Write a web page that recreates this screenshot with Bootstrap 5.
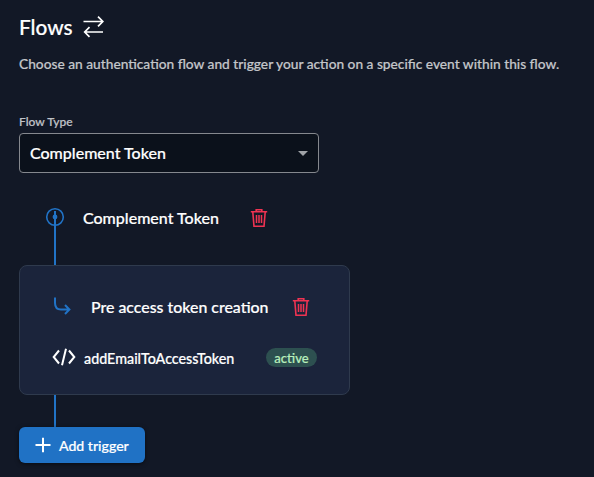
<!DOCTYPE html>
<html lang="en" data-bs-theme="dark">
<head>
<meta charset="utf-8">
<meta name="viewport" content="width=device-width, initial-scale=1">
<title>Flows</title>
<link href="https://cdn.jsdelivr.net/npm/bootstrap@5.3.0/dist/css/bootstrap.min.css" rel="stylesheet">
<style>
body{background:#121826;color:#fff;font-family:Lato,"Liberation Sans",sans-serif;font-weight:500;height:477px;overflow:hidden;-webkit-text-stroke:.2px currentColor}
svg{display:block;flex:none}
.page{padding:13px 19px 0}
.title{font-size:20.800px;line-height:28px;font-weight:500}
.title svg{margin-left:10px}
.lead-text{font-size:13.740px;line-height:20px;color:#c4c6ca;margin:13px 0 0;white-space:nowrap}
.flow-label{font-size:12px;line-height:16px;color:#c0c3c8;margin:40px 0 3px;display:block}
.flow-select{width:300px;height:40px;background:#0b111b;border:1px solid #85888e;border-radius:4px;padding:0 10px;font-size:16px;color:#fff}
.event-row{height:92px;padding-left:26px;font-size:16px}
.event-name{margin:-2px 0 0 18px;width:167px;white-space:nowrap}
.event-row .bin{margin-top:-2px}
.trigger-box{width:331px;height:130px;background:#1b243b;border:1px solid #2f3a4d;border-radius:8px;padding:24px 0 0 32px}
.trigger-row{height:34px;font-size:15.900px;white-space:nowrap}
.trig-name{margin-left:19px;width:201px}
.action-row{margin-top:16px;height:34px;font-size:14.300px;white-space:nowrap}
.act-name{margin:3px 0 0 8px;width:182px}
.state{background:#2d5050;color:#b7eebb;font-size:13px;font-weight:500;width:51px;height:19px;line-height:20px;padding:0;margin-top:1px}
.stem{width:2px;height:32px;margin-left:35px;background:#2173c6}
.add-btn{width:126px;height:36px;background:#2072c5;color:#fff;border:0;border-radius:6px;padding:0 16px;font-size:14.100px;font-weight:500;white-space:nowrap;box-shadow:0 1px 4px rgba(0,0,0,.55)}
.add-btn span{padding-top:2px}
</style>
<script src="https://cdn.jsdelivr.net/npm/bootstrap@5.3.0/dist/js/bootstrap.bundle.min.js"></script>
</head>
<body>
<main class="page">
  <h1 class="title d-flex align-items-center mb-0"><span>Flows</span>
    <svg width="22" height="22" viewBox="0 0 22 22" fill="none" stroke="#fff" stroke-width="1.700"><path d="M.5 5.500H20M15 .700L19.800 5.500L15 10.300M20 16H1M6.500 11.200L1.700 16L6.500 20.800"/></svg>
  </h1>
  <p class="lead-text">Choose an authentication flow and trigger your action on a specific event within this flow.</p>
  <label class="flow-label">Flow Type</label>
  <div class="flow-select d-flex align-items-center justify-content-between" role="combobox">
    <span>Complement Token</span>
    <svg width="10" height="5" viewBox="0 0 10 5"><path d="M0 0H10L5 5Z" fill="#a0a3a8"/></svg>
  </div>
  <section class="event-row d-flex align-items-center">
    <svg width="20" height="92" viewBox="0 0 20 92"><circle cx="10" cy="44" r="8.300" fill="none" stroke="#2173c6" stroke-width="1.600"/><circle cx="10" cy="44" r="2.400" fill="#2173c6"/><path d="M10 38V92" stroke="#2173c6" stroke-width="2"/></svg>
    <span class="event-name">Complement Token</span>
    <svg class="bin" width="18" height="20" viewBox="0 0 18 20" fill="none" stroke="#f03352" stroke-width="1.600"><path d="M.8 3.700H17.200M6.200 3.500V1.700H11.800V3.500M2.800 4L4 18.300H14L15.200 4"/><path d="M6.500 7V15M9 7V15M11.500 7V15" stroke-width="1.500"/></svg>
  </section>
  <section class="trigger-box">
    <div class="trigger-row d-flex align-items-center">
      <svg width="20" height="20" viewBox="0 0 20 20" fill="none" stroke="#2173c6" stroke-width="2"><path d="M3 .5V6Q3 12.500 9 12.500H17.500M13 8L17.400 12.500L13 17"/></svg>
      <span class="trig-name">Pre access token creation</span>
      <svg class="bin" width="18" height="20" viewBox="0 0 18 20" fill="none" stroke="#f03352" stroke-width="1.600"><path d="M.8 3.700H17.200M6.200 3.500V1.700H11.800V3.500M2.800 4L4 18.300H14L15.200 4"/><path d="M6.500 7V15M9 7V15M11.500 7V15" stroke-width="1.500"/></svg>
    </div>
    <div class="action-row d-flex align-items-center">
      <svg width="24" height="18" viewBox="0 0 24 18" fill="none" stroke="#fff" stroke-width="2"><path d="M7 2.500L1.700 9L7 15.500M17 2.500L22.300 9L17 15.500M14 .8L10 17.200"/></svg>
      <span class="act-name">addEmailToAccessToken</span>
      <span class="state badge rounded-pill">active</span>
    </div>
  </section>
  <div class="stem"></div>
  <button class="add-btn btn d-flex align-items-center" type="button">
    <svg width="16" height="16" viewBox="0 0 16 16" stroke="#fff" stroke-width="2"><path d="M.5 8H15.500M8 .7V15.300"/></svg>
    <span class="ms-2">Add trigger</span>
  </button>
</main>
</body>
</html>
